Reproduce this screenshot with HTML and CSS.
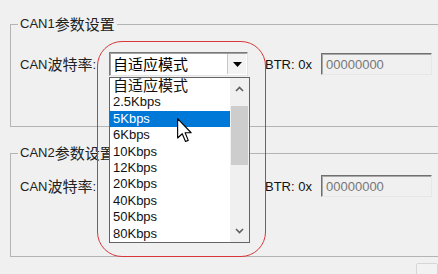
FILE: index.html
```html
<!DOCTYPE html>
<html>
<head>
<meta charset="utf-8">
<link rel="stylesheet" href="styles.css">
</head>
<body>
<div class="page">
  <fieldset class="group g1">
    <legend>CAN1<span class="cjk">参数设置</span></legend>
    <div class="row">
      <span class="lbl">CAN<span class="cjk">波特率</span>:</span>
      <div class="combo">
        <span class="combo-text cjk">自适应模式</span>
        <span class="combo-btn"><svg width="9" height="5" viewBox="0 0 9 5"><polygon points="0,0 9,0 4.5,5" fill="#000"/></svg></span>
      </div>
      <span class="btr">BTR: 0x</span>
      <div class="edit">00000000</div>
    </div>
  </fieldset>
  <fieldset class="group g2">
    <legend>CAN2<span class="cjk">参数设置</span></legend>
    <div class="row">
      <span class="lbl">CAN<span class="cjk">波特率</span>:</span>
      <div class="combo">
        <span class="combo-text"></span>
        <span class="combo-btn"><svg width="9" height="5" viewBox="0 0 9 5"><polygon points="0,0 9,0 4.5,5" fill="#000"/></svg></span>
      </div>
      <span class="btr">BTR: 0x</span>
      <div class="edit">00000000</div>
    </div>
  </fieldset>
  <div class="footer"><div class="btn"></div></div>

  <div class="dropdown">
    <ul class="items">
      <li class="cjk first">自适应模式</li>
      <li>2.5Kbps</li>
      <li class="sel">5Kbps</li>
      <li>6Kbps</li>
      <li>10Kbps</li>
      <li>12Kbps</li>
      <li>20Kbps</li>
      <li>40Kbps</li>
      <li>50Kbps</li>
      <li>80Kbps</li>
    </ul>
    <div class="sbar">
      <div class="sbtn"><svg width="9" height="6" viewBox="0 0 9 6"><polyline points="1,5 4.5,1.5 8,5" fill="none" stroke="#606060" stroke-width="1.6"/></svg></div>
      <div class="track"><div class="thumb"></div></div>
      <div class="sbtn"><svg width="9" height="6" viewBox="0 0 9 6"><polyline points="1,1 4.5,4.5 8,1" fill="none" stroke="#606060" stroke-width="1.6"/></svg></div>
    </div>
  </div>

  <div class="annot"></div>

  <svg class="cursor" width="15" height="25" viewBox="0 0 12 20">
    <path d="M0.5,0.5 L0.5,16 L4.2,12.6 L6.8,18.8 L9,17.9 L6.5,11.8 L11.3,11.8 Z" fill="#fff" stroke="#000" stroke-width="0.9" stroke-linejoin="round"/>
  </svg>
</div>
</body>
</html>
```
FILE: styles.css
```css
html, body {
  margin: 0;
  overflow: hidden;
}
body {
  width: 438px;
  height: 274px;
  background: #f0f0f0;
  font-family: "Liberation Sans", Arial, "Noto Sans CJK SC", sans-serif;
  font-size: 13px;
  color: #111;
}
.cjk {
  font-family: "Noto Sans CJK SC", sans-serif;
  font-size: 15px;
  line-height: 16px;
}
.page {
  position: relative;
  height: 274px;
  box-sizing: border-box;
  padding: 16px 0 0 10px;
}
.group {
  margin: 0;
  width: 440px;
  box-sizing: border-box;
  border: 1px solid #b4b4b4;
  padding-left: 7px;
  padding-right: 0;
}
.group legend {
  padding: 0 2px;
  height: 16px;
  line-height: 16px;
  display: flex;
  align-items: center;
  color: #222;
}
.g1 {
  padding-top: 20px;
  padding-bottom: 50px;
}
.g2 {
  margin-top: 18px;
  padding-top: 13px;
  padding-bottom: 58px;
}
.row {
  display: flex;
  align-items: center;
  height: 24px;
  padding-left: 2px;
}
.lbl {
  width: 89px;
  display: flex;
  align-items: center;
  color: #222;
}
.combo {
  width: 139px;
  height: 24px;
  box-sizing: border-box;
  display: flex;
  align-items: stretch;
  background: #fff;
  border: 1px solid;
  border-color: #7a7a7a #e3e3e3 #e3e3e3 #7a7a7a;
  box-shadow: inset 1px 1px 0 #a0a0a0;
}
.combo-text {
  flex: 1;
  display: flex;
  align-items: center;
  padding-left: 3px;
  color: #000;
}
.combo-btn {
  width: 18px;
  margin: 1px 1px 1px 0;
  display: flex;
  align-items: center;
  justify-content: center;
  background: #f3f3f3;
  border-left: 1px solid #c8c8c8;
}
.btr {
  margin-left: 17px;
  width: 56px;
  color: #111;
}
.edit {
  width: 111px;
  height: 22px;
  box-sizing: border-box;
  padding-left: 4px;
  display: flex;
  align-items: center;
  color: #777;
  background: #f0f0f0;
  border: 1px solid;
  border-color: #707070 #e6e6e6 #e6e6e6 #707070;
  box-shadow: inset 1px 1px 0 #a8a8a8;
}
.footer {
  display: flex;
  padding-left: 406px;
  margin-top: 6px;
}
.btn {
  width: 40px;
  height: 24px;
  box-sizing: border-box;
  border: 1px solid #d6d6d6;
  border-radius: 2px;
  background: #f2f2f2;
}
.dropdown {
  position: absolute;
  left: 109px;
  top: 77px;
  width: 141px;
  height: 166px;
  box-sizing: border-box;
  border: 1px solid #646464;
  background: #fff;
  display: grid;
  grid-template-columns: 1fr 19px;
}
.items {
  list-style: none;
  margin: 0;
  padding: 0;
}
.items li {
  height: 16.4px;
  line-height: 16.4px;
  padding-left: 3px;
  display: flex;
  align-items: center;
  color: #111;
  white-space: nowrap;
}
.items li.first {
  height: 14.4px;
  line-height: 14px;
  padding-bottom: 2px;
}
.items li.sel {
  background: #0078d7;
  color: #fff;
}
.sbar {
  display: flex;
  flex-direction: column;
  background: #f0f0f0;
}
.sbtn {
  height: 22px;
  display: flex;
  align-items: center;
  justify-content: center;
}
.track {
  flex: 1;
  padding-top: 6px;
}
.thumb {
  height: 59px;
  margin: 0 1px;
  background: #cdcdcd;
}
.annot {
  position: absolute;
  left: 97px;
  top: 41px;
  width: 169px;
  height: 216px;
  box-sizing: border-box;
  border: 1.5px solid #d6373b;
  border-radius: 25px;
  pointer-events: none;
}
.cursor {
  position: absolute;
  left: 177px;
  top: 118px;
}
```
